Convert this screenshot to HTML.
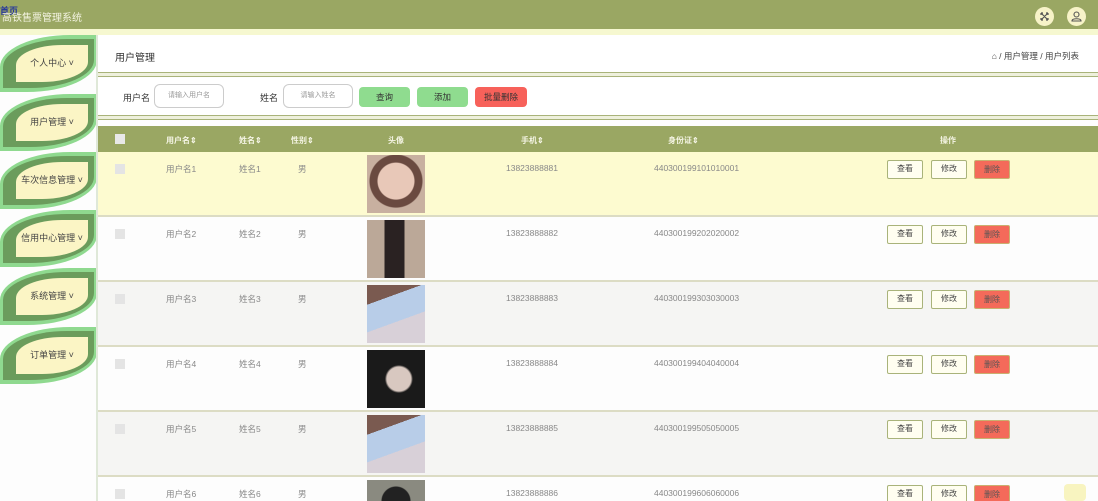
<!DOCTYPE html>
<html style="width:1098px;height:501px;overflow:hidden"><head><meta charset="utf-8"><style>
*{margin:0;padding:0;box-sizing:border-box}
body{width:1098px;height:501px;overflow:hidden;background:#fdfdfd;font-family:"Liberation Sans","Noto Sans CJK SC",sans-serif;position:relative;font-size:9px;color:#555}
.top{position:absolute;left:0;top:0;width:1098px;height:29px;background:#9aa763}
.top .t{position:absolute;left:2px;top:9px;color:#f3f3e0;font-size:10px}
.top .badge{position:absolute;left:0;top:4px;color:#2a3b9a;font-size:9px;font-weight:bold}
.ic{position:absolute;top:7px;width:19px;height:19px;border-radius:50%;background:#f7f3c8}
.strip{position:absolute;left:0;top:29px;width:1098px;height:6px;background:#f6f8d0}
.side{position:absolute;left:0;top:35px;width:97px;height:466px;background:#fdfdfd}
.leaf{position:absolute;left:0;width:97px;height:57px;background:#8fd98f;border-radius:70px 0 70px 0/32px 0 32px 0}
.leaf .m{position:absolute;left:3px;top:4px;right:3px;bottom:4px;background:#6b9c5c;border-radius:64px 0 64px 0/28px 0 28px 0}
.leaf .i{position:absolute;left:16px;top:10px;right:9px;bottom:10px;background:#fbf5c5;border-radius:46px 0 46px 0/20px 0 20px 0;text-align:center;line-height:37px;font-size:9px;color:#444}
.vline{position:absolute;left:96px;top:35px;width:2px;height:466px;background:#dfe8d8}
.hdr{position:absolute;left:98px;top:35px;width:1000px;height:38px;background:#fff}
.hdr .a{position:absolute;left:17px;top:14px;font-size:10px;color:#333}
.hdr .b{position:absolute;right:19px;top:15px;font-size:8.5px;color:#444}
.dl{position:absolute;left:98px;width:1000px;height:5px;border-top:1.5px solid #a9b37a;border-bottom:1.5px solid #a9b37a;background:#eef0dc}
.srch{position:absolute;left:98px;top:78px;width:1000px;height:37px;background:#fff}
.lab{position:absolute;top:13px;font-size:9px;color:#333}
.inp{position:absolute;top:6px;width:70px;height:24px;border:1px solid #ccc;border-radius:6px;font-size:7px;color:#999;text-align:center;line-height:22px}
.btn{position:absolute;top:9px;height:20px;border-radius:4px;font-size:8.5px;text-align:center;line-height:20px;color:#333}
.th{position:absolute;left:98px;top:126px;width:1000px;height:26px;background:#9aa763;color:#f5f5e5;font-size:8px;font-weight:bold}
.th span,.row span{position:absolute}
.th span{top:9px}
.cb{position:absolute;width:10px;height:10px;background:#e4e4e4;left:17px}
.row{position:absolute;left:98px;width:1000px;height:65px;border-bottom:2px solid #dcdcc4;font-size:8.5px;color:#888}
.row span{top:11px}
.av{position:absolute;left:269px;top:3px;width:58px;height:58px}
.ob{position:absolute;top:8px;width:36px;height:19px;border:1.5px solid #a9b37a;border-radius:2px;background:#fffef0;font-size:8px;text-align:center;line-height:16px;color:#444}
.del{position:absolute;top:8px;left:876px;width:36px;height:19px;background:#f46a5a;border:1px solid #c9b070;border-radius:2px;font-size:8px;text-align:center;line-height:17px;color:#555}
</style></head><body>
<div class="top"><span class="badge">首页</span><span class="t">高铁售票管理系统</span>
<div class="ic" style="left:1035px"><svg width="19" height="19"><path d="M6 6l7 7M13 6l-7 7M6 6h2M6 6v2M13 6h-2M13 6v2M6 13h2M6 13v-2M13 13h-2M13 13v-2" stroke="#555" stroke-width="1.2" fill="none"/></svg></div>
<div class="ic" style="left:1067px"><svg width="19" height="19"><circle cx="9.5" cy="7.5" r="2.5" stroke="#555" fill="none" stroke-width="1.1"/><path d="M5 14c0-3 9-3 9 0z" stroke="#555" fill="none" stroke-width="1.1"/></svg></div>
</div>
<div class="strip"></div>
<div class="side">
<div class="leaf" style="top:0"><div class="m"></div><div class="i">个人中心 ˅</div></div>
<div class="leaf" style="top:59px"><div class="m"></div><div class="i">用户管理 ˅</div></div>
<div class="leaf" style="top:117px"><div class="m"></div><div class="i">车次信息管理 ˅</div></div>
<div class="leaf" style="top:175px"><div class="m"></div><div class="i">信用中心管理 ˅</div></div>
<div class="leaf" style="top:233px"><div class="m"></div><div class="i">系统管理 ˅</div></div>
<div class="leaf" style="top:292px"><div class="m"></div><div class="i">订单管理 ˅</div></div>
</div>
<div class="vline"></div>
<div class="hdr"><span class="a">用户管理</span><span class="b">⌂ / 用户管理 / 用户列表</span></div>
<div class="dl" style="top:72px"></div>
<div class="srch">
<span class="lab" style="left:25px">用户名</span><div class="inp" style="left:56px">请输入用户名</div>
<span class="lab" style="left:162px">姓名</span><div class="inp" style="left:185px">请输入姓名</div>
<div class="btn" style="left:261px;width:51px;background:#8fdc8f">查询</div>
<div class="btn" style="left:319px;width:51px;background:#8fdc8f">添加</div>
<div class="btn" style="left:377px;width:52px;background:#f7615a">批量删除</div>
</div>
<div class="dl" style="top:115px"></div>
<div class="th"><div class="cb" style="top:8px;background:#e8e8e8"></div>
<span style="left:68px">用户名⇕</span><span style="left:141px">姓名⇕</span><span style="left:193px">性别⇕</span><span style="left:290px">头像</span><span style="left:423px">手机⇕</span><span style="left:570px">身份证⇕</span><span style="left:842px">操作</span></div>
<div class="row" style="top:152px;background:#fdfbd0"><div class="cb" style="top:12px"></div><span style="left:68px">用户名1</span><span style="left:141px">姓名1</span><span style="left:200px">男</span><div class="av" style="background:radial-gradient(circle at 50% 45%,#e8c8b8 0 18px,#6a4a40 19px 26px,#c8b0a0 27px)"></div><span style="left:408px">13823888881</span><span style="left:556px">440300199101010001</span><div class="ob" style="left:789px">查看</div><div class="ob" style="left:833px">修改</div><div class="del">删除</div></div>
<div class="row" style="top:217px;background:#fdfdfd"><div class="cb" style="top:12px"></div><span style="left:68px">用户名2</span><span style="left:141px">姓名2</span><span style="left:200px">男</span><div class="av" style="background:linear-gradient(90deg,#bba898 0 30%,#2a2222 30% 65%,#bba898 65%)"></div><span style="left:408px">13823888882</span><span style="left:556px">440300199202020002</span><div class="ob" style="left:789px">查看</div><div class="ob" style="left:833px">修改</div><div class="del">删除</div></div>
<div class="row" style="top:282px;background:#f5f5f3"><div class="cb" style="top:12px"></div><span style="left:68px">用户名3</span><span style="left:141px">姓名3</span><span style="left:200px">男</span><div class="av" style="background:linear-gradient(160deg,#7a5a50 0 25%,#b8cde8 25% 60%,#d8d0d8 60%)"></div><span style="left:408px">13823888883</span><span style="left:556px">440300199303030003</span><div class="ob" style="left:789px">查看</div><div class="ob" style="left:833px">修改</div><div class="del">删除</div></div>
<div class="row" style="top:347px;background:#fdfdfd"><div class="cb" style="top:12px"></div><span style="left:68px">用户名4</span><span style="left:141px">姓名4</span><span style="left:200px">男</span><div class="av" style="background:radial-gradient(circle at 55% 50%,#d8c8c0 0 12px,#1a1a1a 14px)"></div><span style="left:408px">13823888884</span><span style="left:556px">440300199404040004</span><div class="ob" style="left:789px">查看</div><div class="ob" style="left:833px">修改</div><div class="del">删除</div></div>
<div class="row" style="top:412px;background:#f5f5f3"><div class="cb" style="top:12px"></div><span style="left:68px">用户名5</span><span style="left:141px">姓名5</span><span style="left:200px">男</span><div class="av" style="background:linear-gradient(160deg,#7a5a50 0 25%,#b8cde8 25% 60%,#d8d0d8 60%)"></div><span style="left:408px">13823888885</span><span style="left:556px">440300199505050005</span><div class="ob" style="left:789px">查看</div><div class="ob" style="left:833px">修改</div><div class="del">删除</div></div>
<div class="row" style="top:477px;height:24px;border:none;background:#fdfdfd"><div class="cb" style="top:12px"></div><span style="left:68px">用户名6</span><span style="left:141px">姓名6</span><span style="left:200px">男</span><div class="av" style="height:21px;background:radial-gradient(circle at 50% 100%,#222 0 14px,#8a8a80 15px)"></div><span style="left:408px">13823888886</span><span style="left:556px">440300199606060006</span><div class="ob" style="left:789px">查看</div><div class="ob" style="left:833px">修改</div><div class="del">删除</div></div>
<div style="position:absolute;left:1064px;top:484px;width:22px;height:17px;background:#f8f4c0;border-radius:4px"></div>
</body></html>
